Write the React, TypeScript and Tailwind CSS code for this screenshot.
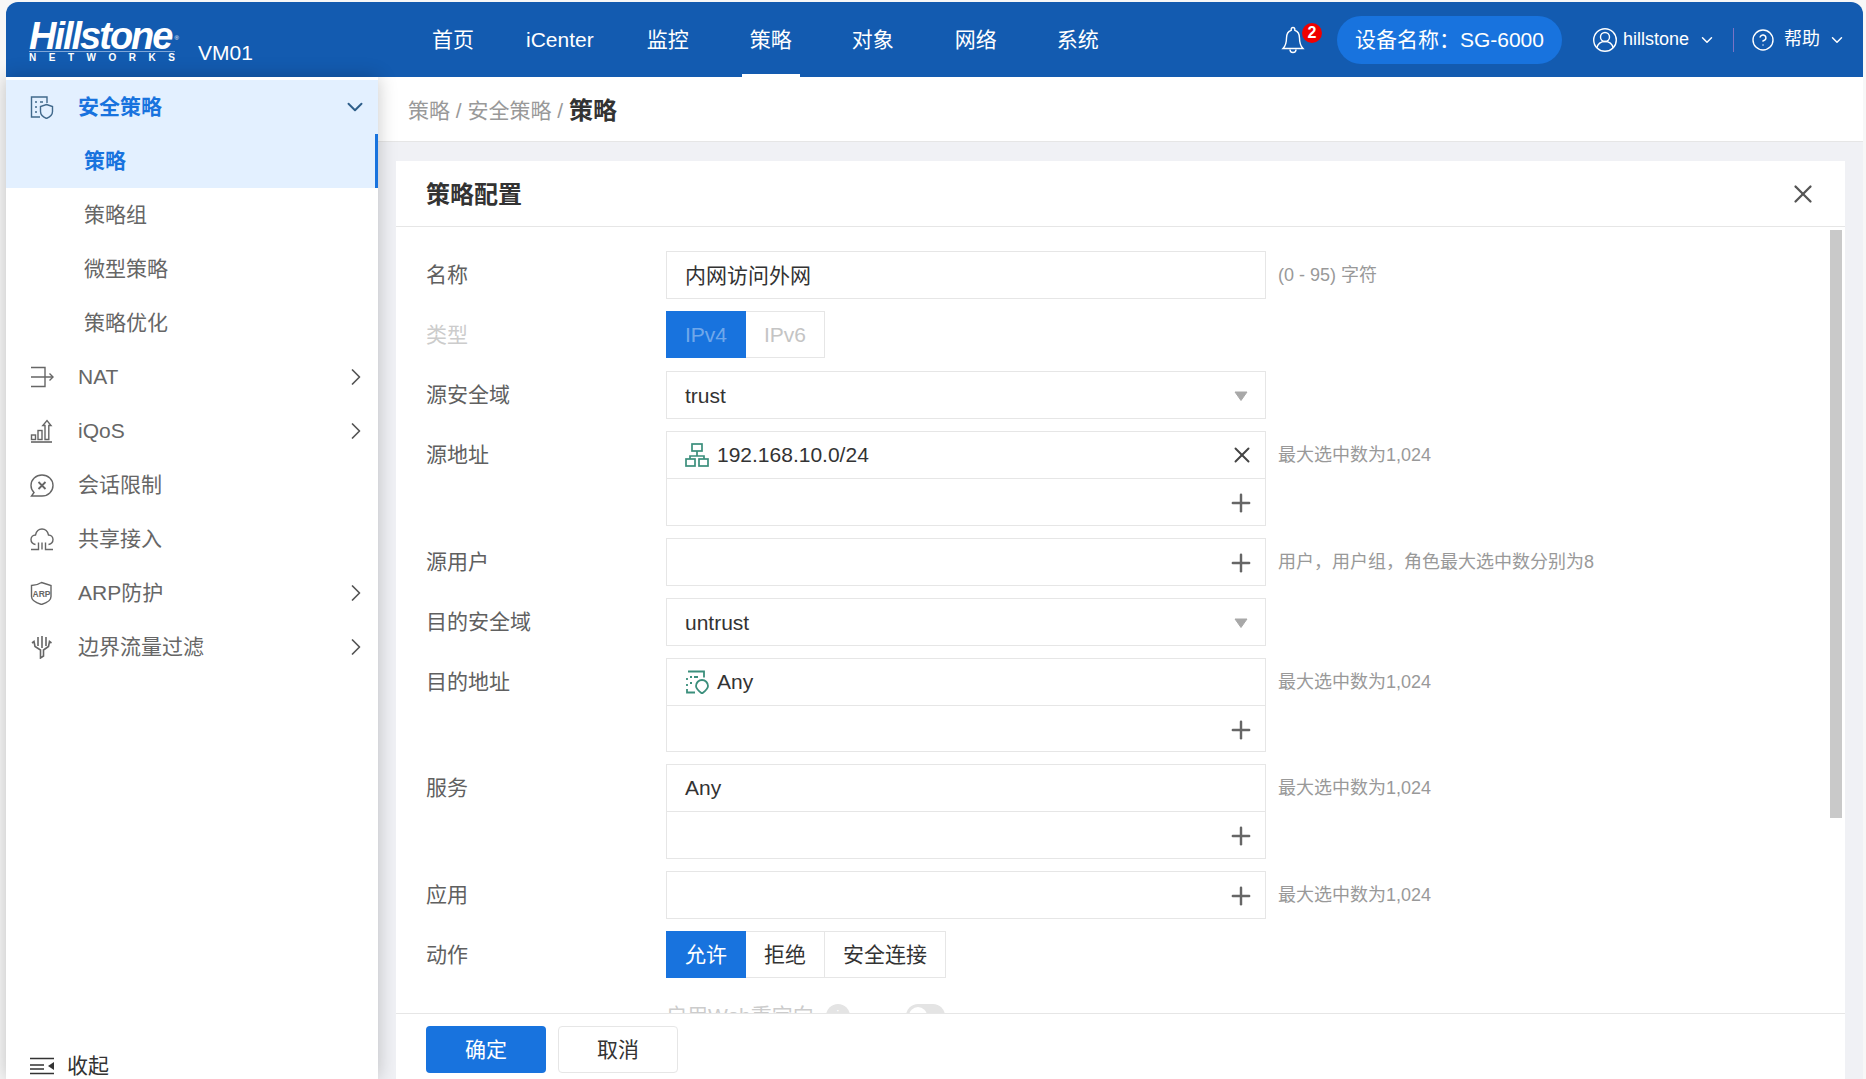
import { ChevronDown, ChevronRight, CircleHelp, Plus, X } from 'lucide-react';
import type { ReactNode } from 'react';

const navItems = [
  { label: '首页', className: '' },
  { label: 'iCenter', className: 'ml-[52px]' },
  { label: '监控', className: 'ml-[53px]' },
  { label: '策略', className: 'ml-[53px] px-2 border-b-white' },
  { label: '对象', className: 'ml-[52px]' },
  { label: '网络', className: 'ml-[61px]' },
  { label: '系统', className: 'ml-[60px]' },
];

function Svg({ children, w = 24, h = 24, stroke = 1.4, className = '' }: { children: ReactNode; w?: number; h?: number; stroke?: number; className?: string }) {
  return (
    <svg width={w} height={h} viewBox={`0 0 ${w} ${h}`} fill="none" stroke="currentColor" strokeWidth={stroke} className={`shrink-0 ${className}`}>
      {children}
    </svg>
  );
}

const PolicyIcon = () => (
  <Svg>
    <path d="M10 22H1.500V2H17v6" />
    <path d="M5 7h2M10 7h3M5 12h2M5 17h2M10 12h1" />
    <path d="M16.500 9.500l6 2v5c0 3-2.500 5.500-6 7-3.500-1.500-6-4-6-7v-5z" />
  </Svg>
);

const NatIcon = () => (
  <Svg>
    <path d="M1 2.500h14v19H1M1 12h22" />
    <path d="M19.500 8.500L23 12l-3.500 3.500" />
  </Svg>
);

const QosIcon = () => (
  <Svg>
    <path d="M1 23h21" strokeWidth="1.600" />
    <rect x="1.500" y="16" width="4" height="4.500" />
    <rect x="8" y="11.500" width="4" height="9" />
    <path d="M15 20.500V6.500h-2.200L17 1.500l4 5h-2.200v14z" />
  </Svg>
);

const SessionIcon = () => (
  <Svg>
    <path d="M4 19.500C2 17.500 1 15 1 12.500 1 6.700 5.900 2 12 2s11 4.700 11 10.500S18.100 23 12 23H1.500z" />
    <path d="M8.500 9l7 7M15.500 9l-7 7" strokeWidth="1.800" />
  </Svg>
);

const CloudIcon = () => (
  <Svg>
    <path d="M5.500 17.500C3 17 1 15 1 12.500 1 10 3 8 5.500 8c.8-3.500 3.400-6 6.500-6s5.700 2.500 6.500 6c2.500 0 4.500 2 4.500 4.500s-2 4.500-4.500 5" />
    <path d="M1 22.500h7.500v-7M12 15.500v7M15.500 15.500v7H23" />
  </Svg>
);

const ArpIcon = () => (
  <Svg>
    <path d="M11.500 1.500L21 4.500v11c0 3.500-4.500 6.500-9.500 8C6.500 22 1.500 19 1.500 15.500v-11c3.500 0 7-1 10-3z" />
    <text x="11.500" y="15.500" textAnchor="middle" fontSize="8.500" fontWeight="700" fill="currentColor" stroke="none" fontFamily="Liberation Sans">ARP</text>
  </Svg>
);

const FilterIcon = () => (
  <Svg stroke={1.6}>
    <path d="M2 8l2-1.500 1 5 5.500 3.500v8l3-2v-6l5-3.500 1-5 2 1.500" />
    <path d="M8 2v9M12 1v12M16 2v9" />
  </Svg>
);

const CollapseIcon = () => (
  <Svg h={18}>
    <path d="M0 1.500h24M0 8h14M0 12h14M0 16.500h24" strokeWidth="1.600" />
    <path d="M24 5v8l-6-4z" fill="currentColor" stroke="none" />
  </Svg>
);

const NetIcon = () => (
  <Svg stroke={1.7} className="text-[#3b8f7c]">
    <rect x="7" y="1" width="10" height="7" />
    <path d="M12 8v5M5 16v-3h14v3" />
    <rect x="1" y="16" width="9" height="7" />
    <rect x="14" y="16" width="9" height="7" />
  </Svg>
);

const AddrIcon = () => (
  <Svg stroke={1.8} className="text-[#3b8f7c]">
    <path d="M3 1.500h16v6M2 8v2M2 14v2M2 19v3.500h8M5 7h2M9 7h4M5 13h2" />
    <path d="M17 10a6 6 0 0 1 6 6c0 3-3.500 5.500-6 7.500-2.500-2-6-4.500-6-7.500a6 6 0 0 1 6-6z" />
  </Svg>
);

const menu = [
  { label: 'NAT', icon: <NatIcon />, arrow: true },
  { label: 'iQoS', icon: <QosIcon />, arrow: true },
  { label: '会话限制', icon: <SessionIcon />, arrow: false },
  { label: '共享接入', icon: <CloudIcon />, arrow: false },
  { label: 'ARP防护', icon: <ArpIcon />, arrow: true },
  { label: '边界流量过滤', icon: <FilterIcon />, arrow: true },
];

function Sidebar() {
  return (
    <aside className="relative z-10 flex w-[372px] shrink-0 flex-col bg-white pt-[3px] text-[21px] text-[#666] shadow-[0_0_18px_rgba(0,0,0,0.22)]">
      <div className="flex h-[54px] items-center bg-[#e3f0ff] pl-6 pr-[10px] font-bold text-[#1873de]">
        <span className="text-[#41698c]"><PolicyIcon /></span>
        <span className="ml-6 flex-1">安全策略</span>
        <ChevronDown size={26} strokeWidth={1.8} className="text-[#2f5f8a]" />
      </div>
      <div className="flex h-[54px] items-center border-r-[3px] border-[#1873de] bg-[#e3f0ff] pl-[78px] font-bold text-[#1873de]">策略</div>
      {['策略组', '微型策略', '策略优化'].map((label) => (
        <div key={label} className="flex h-[54px] items-center pl-[78px]">{label}</div>
      ))}
      {menu.map((item) => (
        <div key={item.label} className="flex h-[54px] items-center pl-6 pr-2">
          {item.icon}
          <span className="ml-6 flex-1">{item.label}</span>
          {item.arrow && <ChevronRight size={28} strokeWidth={1.5} className="text-[#555]" />}
        </div>
      ))}
      <div className="mt-auto flex h-[26px] items-center pl-6 text-[#333]">
        <CollapseIcon />
        <span className="ml-[13px]">收起</span>
      </div>
    </aside>
  );
}

function Hint({ children }: { children?: ReactNode }) {
  return <div className="ml-3 flex h-12 items-center whitespace-nowrap text-[18px] text-[#999]">{children}</div>;
}

function Cell({ children, right, className = '' }: { children?: ReactNode; right?: ReactNode; className?: string }) {
  return (
    <div className={`flex h-[47px] items-center pl-[18px] pr-[10px] ${className}`}>
      <div className="flex flex-1 items-center">{children}</div>
      {right}
    </div>
  );
}

const PlusBtn = () => <Plus size={28} strokeWidth={2.1} className="text-[#666]" />;

function Row({ label, hint, disabled, children, className = '' }: { label: string; hint?: string; disabled?: boolean; children: ReactNode; className?: string }) {
  return (
    <div className={`flex items-start ${className}`}>
      <div className={`flex h-12 w-[240px] shrink-0 items-center ${disabled ? 'text-[#ccc]' : 'text-[#606060]'}`}>{label}</div>
      {children}
      {hint && <Hint>{hint}</Hint>}
    </div>
  );
}

const boxClass = 'w-[600px] border border-[#e6e6e6] bg-white text-[#333]';

function Caret() {
  return (
    <svg width="14" height="10" viewBox="0 0 14 10" className="mr-[7px]">
      <path d="M1 1h12L7 9.500z" fill="#a8a8a8" stroke="#a8a8a8" strokeLinejoin="round" />
    </svg>
  );
}

function Segment({ items, disabled }: { items: { label: string; width: string }[]; disabled?: boolean }) {
  return (
    <div className="flex h-[47px]">
      {items.map((item, i) => (
        <div
          key={item.label}
          className={`flex h-full items-center justify-center border-y ${item.width} ${
            i === 0 ? 'border-[#1873de] bg-[#1873de]' : 'border-r border-[#e6e6e6] bg-white'
          } ${i === 0 ? (disabled ? 'text-white/40' : 'text-white') : disabled ? 'text-[#c4c4c4]' : 'text-[#333]'}`}
        >
          {item.label}
        </div>
      ))}
    </div>
  );
}

function PolicyForm() {
  return (
    <div className="flex flex-col gap-3 pl-[30px] pt-6 text-[21px]">
      <Row label="名称" hint="(0 - 95) 字符">
        <div className={`${boxClass} h-12`}>
          <Cell>内网访问外网</Cell>
        </div>
      </Row>
      <Row label="类型" disabled>
        <Segment disabled items={[{ label: 'IPv4', width: 'w-[80px]' }, { label: 'IPv6', width: 'w-[79px]' }]} />
      </Row>
      <Row label="源安全域">
        <div className={`${boxClass} h-12`}>
          <Cell right={<Caret />}>trust</Cell>
        </div>
      </Row>
      <Row label="源地址" hint="最大选中数为1,024">
        <div className={`${boxClass} h-[95px]`}>
          <Cell right={<X size={26} strokeWidth={1.8} className="text-[#444]" />} className="border-b border-[#e6e6e6]">
            <NetIcon />
            <span className="ml-[8px]">192.168.10.0/24</span>
          </Cell>
          <Cell right={<PlusBtn />} />
        </div>
      </Row>
      <Row label="源用户" hint="用户，用户组，角色最大选中数分别为8">
        <div className={`${boxClass} h-12`}>
          <Cell right={<PlusBtn />} />
        </div>
      </Row>
      <Row label="目的安全域">
        <div className={`${boxClass} h-12`}>
          <Cell right={<Caret />}>untrust</Cell>
        </div>
      </Row>
      <Row label="目的地址" hint="最大选中数为1,024">
        <div className={`${boxClass} h-[94px]`}>
          <Cell className="border-b border-[#e6e6e6]">
            <AddrIcon />
            <span className="ml-2">Any</span>
          </Cell>
          <Cell right={<PlusBtn />} />
        </div>
      </Row>
      <Row label="服务" hint="最大选中数为1,024">
        <div className={`${boxClass} h-[95px]`}>
          <Cell className="border-b border-[#e6e6e6]">Any</Cell>
          <Cell right={<PlusBtn />} />
        </div>
      </Row>
      <Row label="应用" hint="最大选中数为1,024">
        <div className={`${boxClass} h-12`}>
          <Cell right={<PlusBtn />} />
        </div>
      </Row>
      <Row label="动作">
        <Segment
          items={[
            { label: '允许', width: 'w-[80px]' },
            { label: '拒绝', width: 'w-[79px]' },
            { label: '安全连接', width: 'w-[121px]' },
          ]}
        />
      </Row>
      <div className="mt-[1px] flex h-12 items-center pl-[240px] text-[#ccc]">
        <span className="whitespace-nowrap">启用Web重定向</span>
        <span className="ml-3 flex h-6 w-6 items-center justify-center rounded-full bg-[#e4e4e4] text-[14px] text-white">i</span>
        <span className="ml-[56px] h-6 w-[39px] rounded-full bg-[#e4e4e4] p-[3px]">
          <span className="block h-[18px] w-[18px] rounded-full bg-white" />
        </span>
      </div>
    </div>
  );
}

function Main() {
  return (
    <main className="flex min-w-0 flex-1 flex-col bg-[#f0f1f5]">
      <div className="flex h-[65px] shrink-0 items-center border-b border-[#e6e6e6] bg-white pl-[30px] pt-1 text-[21px] text-[#999]">
        策略 / 安全策略 /&nbsp;<span className="text-[24px] font-bold text-[#333]">策略</span>
      </div>
      <div className="relative z-20 ml-[18px] mr-[18px] mt-[19px] flex min-h-0 flex-1 flex-col bg-white">
        <div className="flex h-[66px] shrink-0 items-center justify-between border-b border-[#e6e6e6] pl-[30px] pr-[27px]">
          <span className="pt-[3px] text-[24px] font-bold text-[#333]">策略配置</span>
          <X size={30} strokeWidth={1.8} className="text-[#555]" />
        </div>
        <div className="flex min-h-0 flex-1">
          <div className="min-w-0 flex-1 overflow-hidden">
            <PolicyForm />
          </div>
          <div className="mr-[3px] mt-[3px] h-[588px] w-3 shrink-0 bg-[#c9c9c9]" />
        </div>
        <div className="flex h-[66px] shrink-0 items-start gap-3 border-t border-[#e6e6e6] pl-[30px] pt-3 text-[21px]">
          <button className="flex h-[47px] w-[120px] items-center justify-center rounded bg-[#1873de] text-white">确定</button>
          <button className="flex h-[47px] w-[120px] items-center justify-center rounded border border-[#e6e6e6] bg-white text-[#333]">取消</button>
        </div>
      </div>
    </main>
  );
}

function Brand() {
  return (
    <div className="flex w-[426px] shrink-0 items-end pb-[13px] pl-[23px] text-white">
      <div className="w-[146px]">
        <div className="relative h-8 text-[38px] font-bold italic leading-[34px] tracking-[-2px]">
          Hillstone
          <span className="absolute right-[-4px] top-[2px] text-[6px] font-normal not-italic tracking-normal">®</span>
        </div>
        <div className="flex justify-between border-t border-[#7fa5d6] text-[10px] font-bold leading-[12px]">
          {'NETWORKS'.split('').map((c, i) => (
            <span key={i}>{c}</span>
          ))}
        </div>
      </div>
      <span className="mb-[-1px] ml-[23px] text-[21px] leading-[24px]">VM01</span>
    </div>
  );
}

function Header() {
  return (
    <header className="flex h-[75px] shrink-0 items-stretch rounded-t-xl bg-[#135bb0] pr-[17px] text-white">
      <Brand />
      <nav className="flex items-stretch text-[21px]">
        {navItems.map((item) => (
          <div key={item.label} className={`flex items-center border-y-[3px] border-transparent ${item.className}`}>
            {item.label}
          </div>
        ))}
      </nav>
      <div className="ml-auto flex items-center">
        <div className="relative">
          <svg width="24" height="28" viewBox="0 0 24 28" fill="none" stroke="currentColor" strokeWidth="1.400" className="block">
            <path d="M12 1.500a1.800 1.800 0 0 0-1.800 1.800v1C6.800 5.300 5.500 8.500 5.500 12c0 5-1 8-3.500 10.500h20C19.500 20 18.500 17 18.500 12c0-3.500-1.300-6.700-4.700-7.700v-1A1.800 1.800 0 0 0 12 1.500z" />
            <path d="M9 23.500a3 3 0 0 0 6 0" />
          </svg>
          <span className="absolute left-[21px] top-[-3px] flex h-5 w-5 items-center justify-center rounded-full bg-[#f00000] text-[16px] font-bold">2</span>
        </div>
        <div className="ml-[32px] flex h-12 w-[225px] items-center justify-center rounded-full bg-[#1873de] text-[21px]">设备名称：SG-6000</div>
        <svg width="24" height="26" viewBox="0 0 24 26" fill="none" stroke="currentColor" strokeWidth="1.400" className="ml-[31px]">
          <circle cx="12" cy="13" r="11.300" />
          <circle cx="12" cy="10" r="4.500" />
          <path d="M3.800 21c1-4 4-6.500 8.200-6.500s7.200 2.500 8.200 6.500" />
        </svg>
        <span className="ml-[6px] text-[18px]">hillstone</span>
        <ChevronDown size={18} strokeWidth={2} className="ml-[9px]" />
        <span className="ml-[17px] h-6 w-px bg-[#7a73c4]" />
        <CircleHelp size={24} strokeWidth={1.4} className="ml-[17px]" />
        <span className="ml-[9px] text-[18px]">帮助</span>
        <ChevronDown size={18} strokeWidth={2} className="ml-[8px]" />
      </div>
    </header>
  );
}

export default function App() {
  return (
    <div className="flex h-[1079px] w-[1866px] flex-col overflow-hidden bg-[#f7f7f7] pl-[6px] pr-[3px] pt-[2px] font-['Liberation_Sans','Noto_Sans_CJK_SC',sans-serif]">
      <Header />
      <div className="flex min-h-0 flex-1">
        <Sidebar />
        <Main />
      </div>
    </div>
  );
}
